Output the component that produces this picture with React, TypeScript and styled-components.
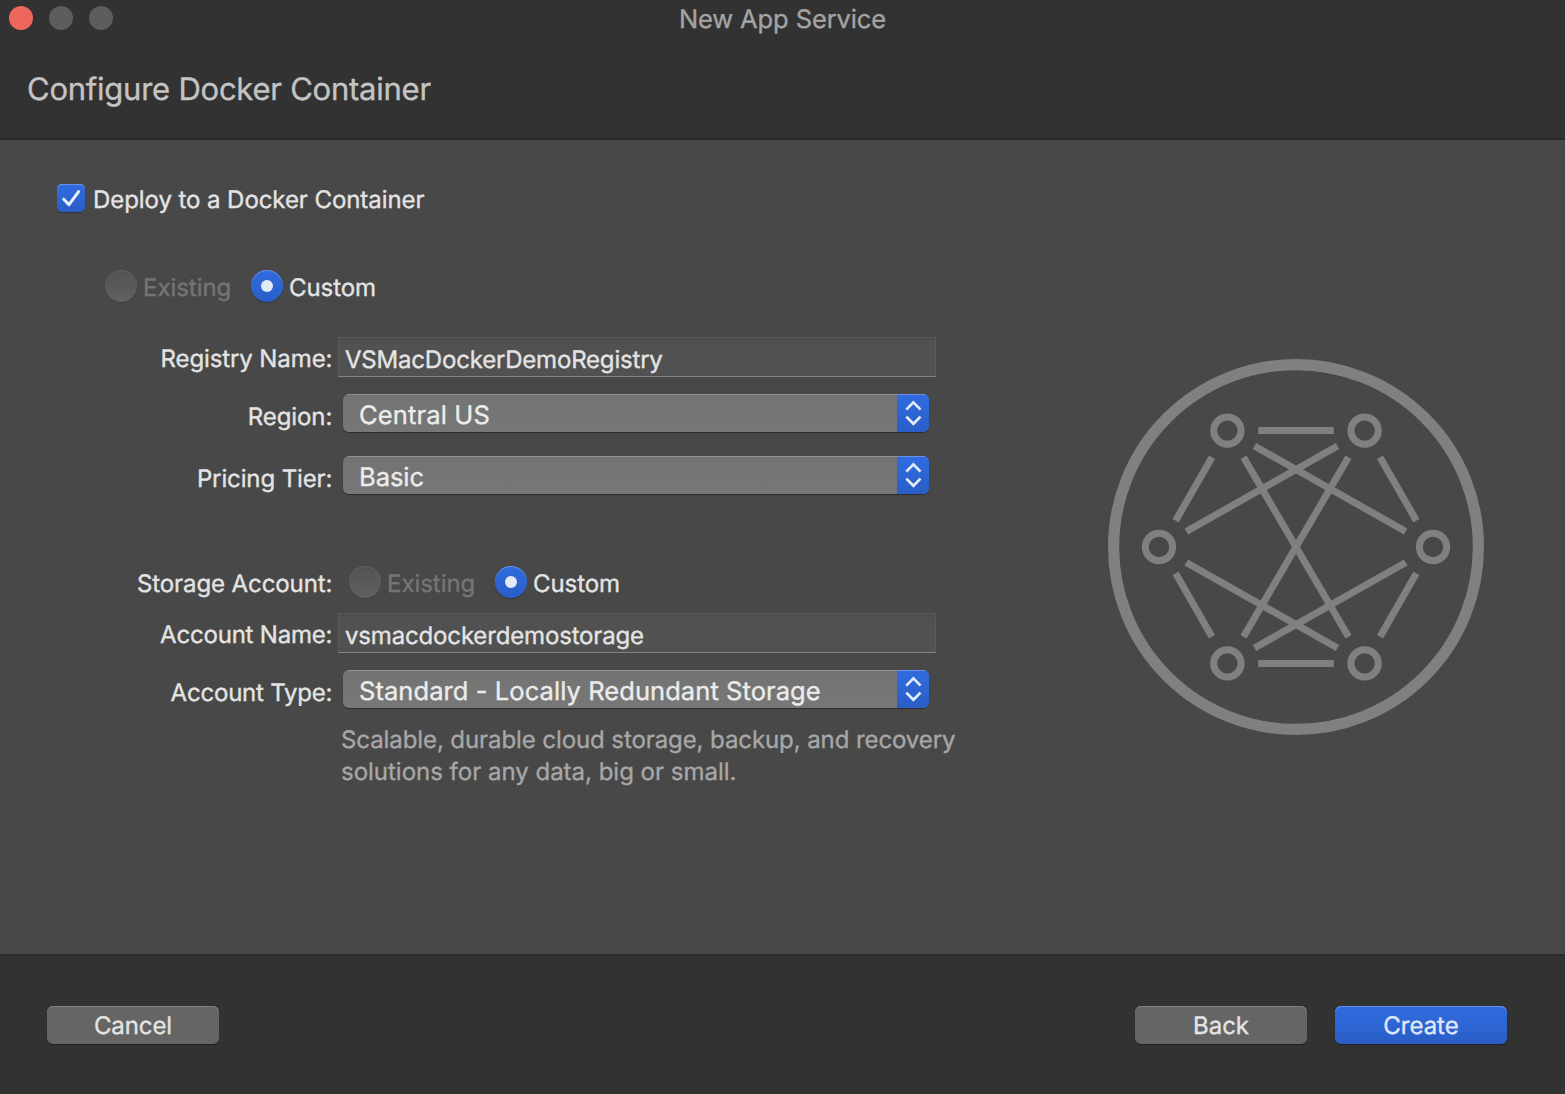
import React, { useState } from "react";
import styled, { createGlobalStyle, css } from "styled-components";

const GlobalStyle = createGlobalStyle`
  * { box-sizing: border-box; }
  body {
    margin: 0;
    background: #484848;
    overflow: hidden;
    font-family: Inter, "Liberation Sans", sans-serif;
  }
  button, input { font-family: inherit; }
`;

const text = css<{ $track?: number }>`
  font-size: 24px;
  line-height: 29px;
  letter-spacing: ${({ $track = 0 }) => $track}px;
  white-space: nowrap;
  color: #e4e4e4;
  -webkit-text-stroke: 0.35px currentColor;
  text-rendering: geometricPrecision;
`;

const blueFill = css`
  background: linear-gradient(#306be0, #2a5ec6);
  box-shadow: inset 0 1px 0 #6691e6, 0 1px 1px rgba(0, 0, 0, 0.3);
`;

const Window = styled.div`
  display: flex;
  flex-direction: column;
  width: 1565px;
  height: 1094px;
  background: #484848;
`;

const Header = styled.header`
  flex: none;
  height: 140px;
  background: #323232;
  border-bottom: 2px solid #2b2b2b;
`;

const TitleBar = styled.div`
  display: grid;
  grid-template-columns: 1fr auto 1fr;
  height: 40px;
`;

const Lights = styled.div`
  display: flex;
  gap: 16px;
  padding: 6px 0 0 9px;
`;

const Light = styled.span<{ $color: string }>`
  width: 24px;
  height: 24px;
  border-radius: 50%;
  background: ${({ $color }) => $color};
`;

const WindowTitle = styled.div`
  ${text}
  font-size: 25.5px;
  line-height: 30px;
  padding-top: 5px;
  color: #a4a4a4;
`;

const Heading = styled.h1`
  ${text}
  margin: 0;
  padding: 31px 0 0 27px;
  font-size: 31px;
  line-height: 38px;
  font-weight: 400;
  color: #c4c4c4;
`;

const Body = styled.main`
  flex: 1;
  display: flex;
  align-items: flex-start;
`;

const Form = styled.div`
  display: flex;
  flex-direction: column;
  width: 1108px;
  padding-top: 44px;
`;

const CheckLine = styled.label`
  display: flex;
  gap: 8px;
  height: 28px;
  padding-left: 57px;
`;

const CheckBox = styled.svg`
  flex: none;
  width: 28px;
  height: 28px;
  border-radius: 5px;
  ${blueFill}
  background: linear-gradient(#6691e6 1px, #306be0 1px, #2a5ec6);
`;

const CheckText = styled.span`
  ${text}
  padding-top: 1px;
`;

const RadioGroup = styled.div<{ $indent: number }>`
  display: flex;
  height: 32px;
  padding-left: ${({ $indent }) => $indent}px;
`;

const RadioOption = styled.label<{ $width?: number }>`
  display: flex;
  gap: 6px;
  width: ${({ $width }) => ($width ? `${$width}px` : "auto")};
`;

const RadioDot = styled.span<{ $on?: boolean }>`
  flex: none;
  display: grid;
  place-items: center;
  width: 32px;
  height: 32px;
  border-radius: 50%;
  ${({ $on }) =>
    $on
      ? blueFill
      : css`
          background: linear-gradient(#535353, #606060);
          box-shadow: inset 0 1px 0 #626262, 0 1px 1px rgba(0, 0, 0, 0.12);
        `}

  &::after {
    content: "";
    width: 12px;
    height: 12px;
    border-radius: 50%;
    background: ${({ $on }) => ($on ? "#e2eafa" : "transparent")};
  }
`;

const RadioText = styled.span<{ $off?: boolean }>`
  ${text}
  padding-top: 3px;
  ${({ $off }) => $off && "color: #757575;"}
`;

const Row = styled.div<{ $gap: number }>`
  display: flex;
  align-items: flex-start;
  margin-top: ${({ $gap }) => $gap}px;
`;

const Label = styled.span<{ $drop: number }>`
  ${text}
  width: 334px;
  padding: ${({ $drop }) => $drop}px 1.7px 0 0;
  text-align: right;
`;

const TextField = styled.input<{ $track?: number }>`
  ${text}
  width: 598px;
  height: 40px;
  margin: 0 0 0 4px;
  padding: 6px 6px 2px;
  background: linear-gradient(#4b4b4b, #515151 4px);
  border: 1px solid #5b5b5b;
  border-bottom-color: #858585;
  border-radius: 0;
  outline: none;
`;

const PopUp = styled.button`
  display: flex;
  width: 586px;
  height: 38px;
  margin: 0 0 0 9px;
  padding: 0;
  overflow: hidden;
  border: 0;
  border-radius: 6px;
  background: linear-gradient(#929292 1px, #737373 1px, #777777);
  box-shadow: 0 1px 1px rgba(0, 0, 0, 0.4);
`;

const PopUpValue = styled.span`
  ${text}
  flex: 1;
  padding: 7px 0 0 16px;
  font-size: 25.5px;
  line-height: 30px;
  text-align: left;
  color: #ececec;
`;

const Stepper = styled.svg`
  flex: none;
  width: 32px;
  height: 38px;
  background: linear-gradient(#6691e6 1px, #306be0 1px, #2a5ec6);
`;

const Hint = styled.p`
  ${text}
  margin: 16px 0 0 341px;
  line-height: 32px;
  color: #a7a7a7;
`;

const HintLine = styled.span<{ $track: number }>`
  display: block;
  letter-spacing: ${({ $track }) => $track}px;
`;

const Emblem = styled.svg`
  flex: none;
  width: 376px;
  height: 376px;
  margin-top: 219px;
`;

const Footer = styled.footer`
  flex: none;
  display: flex;
  align-items: flex-start;
  gap: 28px;
  height: 140px;
  padding: 50px 58px 0 47px;
  background: #323232;
  border-top: 2px solid #2b2b2b;
`;

const PushButton = styled.button<{ $primary?: boolean; $track?: number; $pushRight?: boolean }>`
  ${text}
  width: 172px;
  height: 38px;
  margin: 0 0 0 ${({ $pushRight }) => ($pushRight ? "auto" : "0")};
  padding: 5px 0 4px;
  border: 0;
  border-radius: 6px;
  text-align: center;
  ${({ $primary }) =>
    $primary
      ? css`
          ${blueFill}
          color: #e0e8fa;
        `
      : css`
          background: #656565;
          box-shadow: inset 0 1px 0 #828282, 0 1px 1px rgba(0, 0, 0, 0.4);
        `}
`;

function Chevrons() {
  return (
    <Stepper viewBox="0 0 32 38" fill="none" stroke="#e4ecfb" strokeWidth="2.7">
      <path d="M9.3 15.6 16.4 8.4 23.5 15.6M9.3 22.6 16.4 29.8 23.5 22.6" />
    </Stepper>
  );
}

function Radios({ indent }: { indent: number }) {
  return (
    <RadioGroup $indent={indent}>
      <RadioOption $width={146}>
        <RadioDot />
        <RadioText $off $track={-0.04}>Existing</RadioText>
      </RadioOption>
      <RadioOption>
        <RadioDot $on />
        <RadioText $track={-0.06}>Custom</RadioText>
      </RadioOption>
    </RadioGroup>
  );
}

type FieldProps = { label: string; labelTrack: number; value: string; track: number; gap: number };

function InputRow({ label, labelTrack, value, track, gap }: FieldProps) {
  const [current, setCurrent] = useState(value);
  return (
    <Row $gap={gap}>
      <Label $drop={7} $track={labelTrack}>{label}</Label>
      <TextField $track={track} value={current} spellCheck={false} onChange={(e) => setCurrent(e.target.value)} />
    </Row>
  );
}

function PopUpRow({ label, labelTrack, value, track, gap }: FieldProps) {
  return (
    <Row $gap={gap}>
      <Label $drop={8} $track={labelTrack}>{label}</Label>
      <PopUp>
        <PopUpValue $track={track}>{value}</PopUpValue>
        <Chevrons />
      </PopUp>
    </Row>
  );
}

const nodes = [[-137, 0], [137, 0], [-68.6, -116.4], [68.6, -116.4], [-68.6, 116.4], [68.6, 116.4]];

function NetworkEmblem() {
  return (
    <Emblem viewBox="-188 -188 376 376" fill="none" stroke="#808080" strokeWidth="7">
      <circle r="182.4" strokeWidth="11.2" />
      {nodes.map(([x, y]) => (
        <circle key={`${x},${y}`} cx={x} cy={y} r="13.7" />
      ))}
      <path d="M-37.8-116.4H37.8M-37.8 116.4H37.8" />
      <path d="M-84-89.7-120.4-26.3M84-89.7 120.4-26.3M-84 89.7-120.4 26.3M84 89.7 120.4 26.3" />
      <path d="M-109.7-15.5 41.5-101M109.7-15.5-41.5-101M-109.7 15.5 41.5 101M109.7 15.5-41.5 101" />
      <path d="M-52.5-89.7 52.5 89.7M52.5-89.7-52.5 89.7" />
    </Emblem>
  );
}

export default function App() {
  return (
    <Window>
      <GlobalStyle />
      <Header>
        <TitleBar>
          <Lights>
            <Light $color="#ee675c" />
            <Light $color="#5d5d5d" />
            <Light $color="#5d5d5d" />
          </Lights>
          <WindowTitle $track={-0.11}>New App Service</WindowTitle>
        </TitleBar>
        <Heading $track={-0.241}>Configure Docker Container</Heading>
      </Header>
      <Body>
        <Form>
          <CheckLine>
            <CheckBox viewBox="0 0 28 28" fill="none" stroke="#e8effc" strokeWidth="3" strokeLinecap="round" strokeLinejoin="round">
              <path d="M6.7 15.2 12 20.6 21.6 7.6" />
            </CheckBox>
            <CheckText $track={-0.07}>Deploy to a Docker Container</CheckText>
          </CheckLine>
          <Row $gap={58}>
            <Radios indent={105} />
          </Row>
          <InputRow gap={35} label="Registry Name:" labelTrack={-0.11} value="VSMacDockerDemoRegistry" track={-0.19} />
          <PopUpRow gap={17} label="Region:" labelTrack={-0.08} value="Central US" track={0.14} />
          <PopUpRow gap={24} label="Pricing Tier:" labelTrack={-0.12} value="Basic" track={-0.05} />
          <Row $gap={72}>
            <Label $drop={3} $track={-0.095}>Storage Account:</Label>
            <Radios indent={15} />
          </Row>
          <InputRow gap={15} label="Account Name:" labelTrack={-0.2} value="vsmacdockerdemostorage" track={-0.16} />
          <PopUpRow gap={17} label="Account Type:" labelTrack={-0.21} value="Standard - Locally Redundant Storage" track={0.07} />
          <Hint>
            <HintLine $track={-0.09}>Scalable, durable cloud storage, backup, and recovery</HintLine>
            <HintLine $track={-0.009}>solutions for any data, big or small.</HintLine>
          </Hint>
        </Form>
        <NetworkEmblem />
      </Body>
      <Footer>
        <PushButton $track={-0.1}>Cancel</PushButton>
        <PushButton $pushRight $track={0}>Back</PushButton>
        <PushButton $primary $track={0}>Create</PushButton>
      </Footer>
    </Window>
  );
}
